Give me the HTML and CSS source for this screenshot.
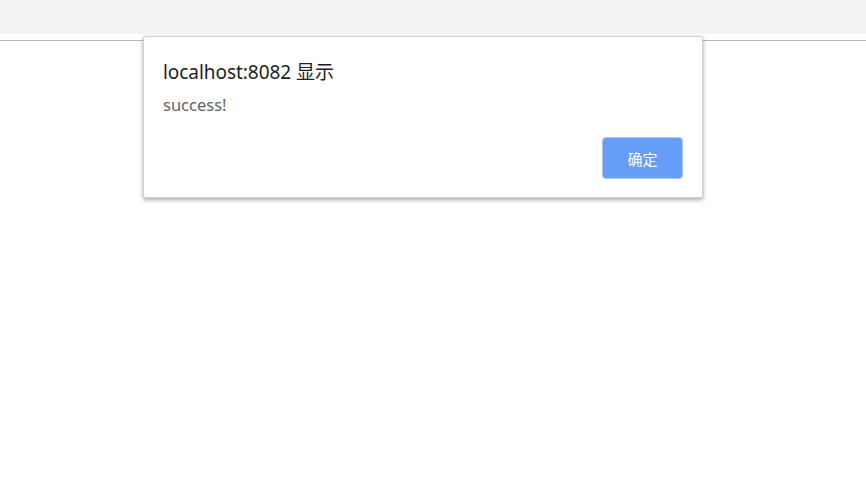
FILE: index.html
```html
<!DOCTYPE html>
<html>
<head>
<meta charset="utf-8">
<link rel="stylesheet" href="styles.css">
</head>
<body>
<div class="chrome">
  <div class="tabstrip"></div>
  <div class="gap"></div>
</div>
<div class="page"></div>
<div class="dialog">
  <div class="title">localhost:8082 显示</div>
  <div class="message">success!</div>
  <div class="actions">
    <button class="ok">确定</button>
  </div>
</div>
</body>
</html>
```

FILE: styles.css
```css
html, body {
  margin: 0;
  padding: 0;
  background: #ffffff;
  font-family: "Noto Sans", "Noto Sans CJK SC", sans-serif;
}
.chrome {
  display: flex;
  flex-direction: column;
}
.tabstrip {
  height: 34px;
  background: #f1f3f4;
}
.gap {
  height: 6px;
  background: #ffffff;
  border-bottom: 1px solid #b8b8b8;
}
.page {
  height: 453px;
}
.dialog {
  position: absolute;
  left: 143px;
  top: 36px;
  width: 560px;
  height: 162px;
  box-sizing: border-box;
  background: #ffffff;
  border: 1px solid #d0d0d0;
  border-radius: 2px;
  box-shadow: 0 2px 4px rgba(0, 0, 0, 0.35);
  padding: 22px 19px 18px 19px;
  display: flex;
  flex-direction: column;
}
.title {
  font-size: 19px;
  color: #202124;
  line-height: 26px;
  letter-spacing: -0.05px;
}
.message {
  margin-top: 9px;
  font-size: 16.5px;
  color: #5f6368;
  line-height: 22px;
}
.actions {
  margin-top: auto;
  display: flex;
  justify-content: flex-end;
}
.ok {
  width: 81px;
  height: 42px;
  box-sizing: border-box;
  background: #669df6;
  border: 1px solid #a8c7fa;
  border-radius: 4px;
  color: #ffffff;
  font-family: "Noto Sans CJK SC", sans-serif;
  font-size: 15px;
  padding: 0;
}
```
